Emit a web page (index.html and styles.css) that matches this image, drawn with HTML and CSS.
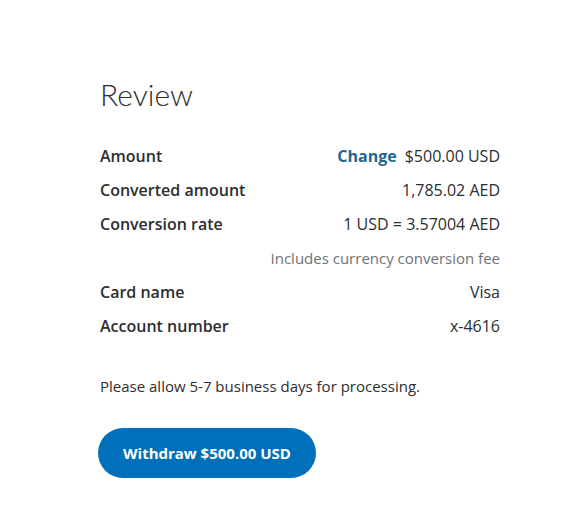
FILE: index.html
```html
<!DOCTYPE html>
<html>
<head>
<meta charset="utf-8">
<link rel="stylesheet" href="styles.css">
</head>
<body>
<main class="review">
  <h1 class="title">Review</h1>
  <div class="rows">
    <div class="row"><span class="label">Amount</span><span class="value"><a class="change" href="#">Change</a>$500.00 USD</span></div>
    <div class="row"><span class="label">Converted amount</span><span class="value">1,785.02 AED</span></div>
    <div class="row"><span class="label">Conversion rate</span><span class="value">1 USD = 3.57004 AED</span></div>
    <div class="row note"><span class="value muted">Includes currency conversion fee</span></div>
    <div class="row"><span class="label">Card name</span><span class="value">Visa</span></div>
    <div class="row"><span class="label">Account number</span><span class="value">x-4616</span></div>
  </div>
  <p class="notice">Please allow 5-7 business days for processing.</p>
  <button class="withdraw">Withdraw $500.00 USD</button>
</main>
</body>
</html>
```
FILE: styles.css
```css
html, body { margin: 0; padding: 0; background: #fff; }
body { font-family: "Open Sans", "Liberation Sans", sans-serif; color: #2c2e2f; }
.review { width: 400px; margin-left: 100px; padding-top: 72px; }
.title { font-family: Lato, sans-serif; font-weight: 300; font-size: 30px; margin: 0 0 23px 0; line-height: 44px; color: #2c2e2f; }
.rows { display: flex; flex-direction: column; }
.row { display: flex; justify-content: space-between; align-items: center; height: 34px; font-size: 16px; }
.row.note { justify-content: flex-end; font-size: 15px; }
.label { font-weight: 600; }
.value { text-align: right; }
.muted { color: #6c7378; }
.change { color: #1f6791; font-weight: 700; text-decoration: none; margin-right: 8px; }
.notice { font-size: 15px; margin: 33px 0 0 0; line-height: 20px; }
.withdraw { margin-top: 32px; margin-left: -2px; width: 218px; height: 50px; border: none; border-radius: 25px; background: #0070ba; color: #fff; font-family: "Open Sans", sans-serif; font-weight: 700; font-size: 15px; }
```
